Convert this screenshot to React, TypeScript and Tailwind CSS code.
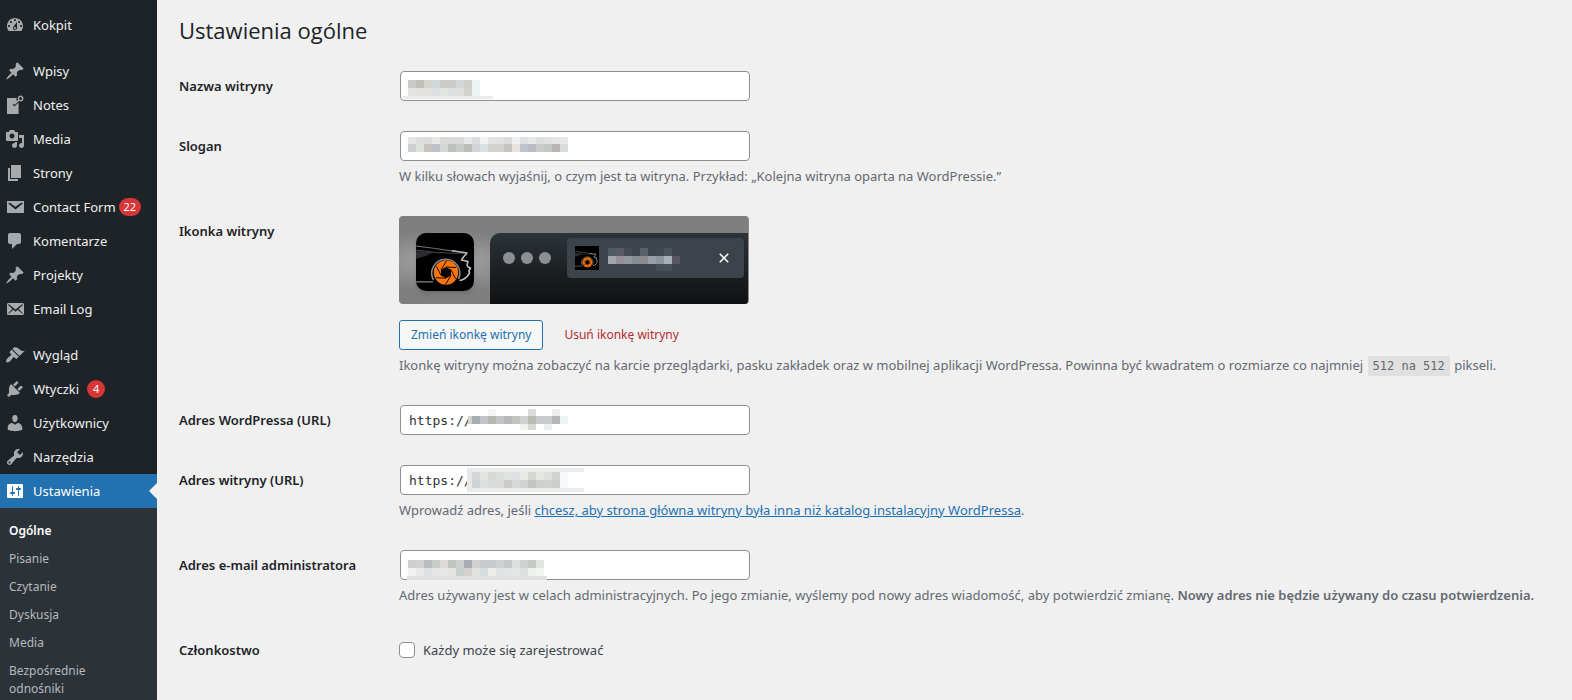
import type { ReactNode } from "react"

interface MenuItem {
  label: string
  icon: string
  badge?: string
  badgeGap?: string
  current?: boolean
}

const ICONS: Record<string, string> = {
  dashboard:
    "M3.76 16h12.48c1.1-1.37 1.76-3.11 1.76-5 0-4.42-3.58-8-8-8s-8 3.58-8 8c0 1.89.66 3.63 1.76 5zM10 4c.55 0 1 .45 1 1s-.45 1-1 1-1-.45-1-1 .45-1 1-1zM6 6c.55 0 1 .45 1 1s-.45 1-1 1-1-.45-1-1 .45-1 1-1zm8 0c.55 0 1 .45 1 1s-.45 1-1 1-1-.45-1-1 .45-1 1-1zm-5.37 5.55L12 7v6c0 1.1-.9 2-2 2s-2-.9-2-2c0-.57.24-1.08.63-1.45zM4 10c.55 0 1 .45 1 1s-.45 1-1 1-1-.45-1-1 .45-1 1-1zm12 0c.55 0 1 .45 1 1s-.45 1-1 1-1-.45-1-1 .45-1 1-1zm-5 3c0-.55-.45-1-1-1s-1 .45-1 1 .45 1 1 1 1-.45 1-1z",
  post: "M10.44 3.02l1.82-1.82 6.36 6.35-1.83 1.82c-1.05-.68-2.48-.57-3.41.36l-.75.75c-.92.93-1.04 2.35-.35 3.41l-1.83 1.82-2.41-2.41-2.8 2.79c-.42.42-3.38 2.71-3.8 2.29s1.86-3.39 2.28-3.81l2.79-2.79L4.1 9.36l1.83-1.82c1.05.69 2.48.57 3.4-.36l.75-.75c.93-.92 1.05-2.35.36-3.41z",
  notes:
    "M2 3h9.6c-.3 1.2-.1 2.2.4 3L7.8 9.800l1.600 1.600L13.600 7.400V19H2zM15.500.500a3 3 0 1 1-1.500 5.600l-4.300 3.900-.9-.9 4.300-4A3 3 0 0 1 15.500.500zm0 1.500a1.500 1.500 0 1 0 0 3 1.500 1.500 0 0 0 0-3z",
  media:
    "M13 11V4c0-.55-.45-1-1-1h-1.67L9 1H5L3.67 3H2c-.55 0-1 .45-1 1v7c0 .55.45 1 1 1h10c.55 0 1-.45 1-1zM7 4.5c1.38 0 2.5 1.12 2.5 2.5S8.38 9.5 7 9.5 4.5 8.38 4.5 7 5.62 4.5 7 4.5zM14 6h5v10.5c0 1.38-1.12 2.5-2.5 2.5S14 17.88 14 16.5s1.12-2.5 2.5-2.5c.17 0 .34.02.5.05V9h-3V6zm-4 8.05V13h2v3.5c0 1.38-1.12 2.5-2.5 2.5S7 17.88 7 16.5 8.12 14 9.5 14c.17 0 .34.02.5.05z",
  page: "M6 15V2h10v13H6zm-1 1h8v2H3V5h2v11z",
  email:
    "M2 4h17v12H2zM4.8 5.83c-.35-.25-.88-.24-1.17.17-.3.41-.11.87.13 1.07l6.73 5.53 6.74-5.53c.24-.2.43-.66.13-1.07-.29-.41-.82-.42-1.17-.17l-5.7 3.86z",
  emailAlt:
    "M19 14.5v-9c0-.83-.67-1.5-1.5-1.5H3.49c-.83 0-1.5.67-1.5 1.5v9c0 .83.67 1.5 1.5 1.5H17.5c.83 0 1.5-.67 1.5-1.5zm-1.31-9.11c.33.33.15.67-.03.84L13.6 9.95l3.9 4.06c.12.14.2.36.06.51-.13.16-.43.15-.56.05l-4.37-3.73-2.14 1.95-2.13-1.95-4.37 3.73c-.13.1-.43.11-.56-.05-.14-.15-.06-.37.06-.51l3.9-4.06-4.06-3.72c-.18-.17-.36-.51-.03-.84s.67-.17.95.07l6.24 5.04 6.25-5.04c.28-.24.62-.4.95-.07z",
  comments: "M5 2h9c1.1 0 2 .9 2 2v7c0 1.1-.9 2-2 2h-2l-5 5v-5H5c-1.1 0-2-.9-2-2V4c0-1.1.9-2 2-2z",
  appearance:
    "M14.48 11.06L7.41 3.99l1.5-1.5c.5-.56 2.3-.47 3.51.32 1.21.8 1.43 1.28 2.91 2.1 1.18.64 2.45 1.26 4.45.85zm-.71.71L6.7 4.7 4.93 6.47c-.39.39-.39 1.02 0 1.41l1.06 1.06c.39.39.39 1.03 0 1.42-.6.6-1.43 1.11-2.21 1.69-.35.26-.7.53-1.01.84C1.43 14.23.4 16.08 1.4 17.07c.99 1 2.84-.03 4.18-1.36.31-.31.58-.66.85-1.02.57-.78 1.08-1.61 1.69-2.21.39-.39 1.02-.39 1.41 0l1.06 1.06c.39.39 1.02.39 1.41 0z",
  plugins:
    "M13.11 4.36L9.87 7.6 8 5.73l3.24-3.24c.35-.34 1.05-.2 1.56.32.52.51.66 1.21.31 1.55zm-8 1.77l.91-1.12 9.01 9.01-1.19.84c-.71.71-2.63 1.16-3.82 1.16H6.14L4.9 17.26c-.59.59-1.54.59-2.12 0-.59-.58-.59-1.53 0-2.12l1.24-1.24v-3.88c0-1.13.4-3.19 1.09-3.89zm7.26 3.97l3.24-3.24c.34-.35 1.04-.21 1.55.31.52.51.66 1.21.31 1.55l-3.24 3.25z",
  users:
    "M10 9.25c-2.27 0-2.73-3.44-2.73-3.44C7 4.02 7.82 2 9.97 2c2.16 0 2.98 2.02 2.71 3.81 0 0-.41 3.44-2.68 3.44zm0 2.57L12.72 10c2.39 0 4.52 2.33 4.52 4.53v2.49s-3.65 1.13-7.24 1.13c-3.65 0-7.24-1.13-7.24-1.13v-2.49c0-2.25 1.94-4.48 4.47-4.48z",
  tools:
    "M16.68 9.77c-1.34 1.34-3.3 1.67-4.95.99l-5.41 6.52c-.99.99-2.59.99-3.58 0s-.99-2.59 0-3.57l6.52-5.42c-.68-1.65-.35-3.61.99-4.95 1.28-1.28 3.12-1.62 4.72-1.06l-2.89 2.89 2.82 2.82 2.86-2.87c.53 1.58.18 3.39-1.08 4.65zM3.81 16.21c.4.39 1.04.39 1.43 0 .4-.4.4-1.04 0-1.43-.39-.4-1.03-.4-1.43 0-.39.39-.39 1.03 0 1.43z",
  settings:
    "M18 16V4c0-.55-.45-1-1-1H3c-.55 0-1 .45-1 1v12c0 .55.45 1 1 1h14c.55 0 1-.45 1-1zM8 11h1c.55 0 1 .45 1 1s-.45 1-1 1H8v1.5c0 .28-.22.5-.5.5s-.5-.22-.5-.5V13H6c-.55 0-1-.45-1-1s.45-1 1-1h1V5.5c0-.28.22-.5.5-.5s.5.22.5.5V11zm5-2h-1c-.55 0-1-.45-1-1s.45-1 1-1h1V5.5c0-.28.22-.5.5-.5s.5.22.5.5V7h1c.55 0 1 .45 1 1s-.45 1-1 1h-1v5.5c0 .28-.22.5-.5.5s-.5-.22-.5-.5V9z",
}

const MENU: MenuItem[][] = [
  [{ label: "Kokpit", icon: "dashboard" }],
  [
    { label: "Wpisy", icon: "post" },
    { label: "Notes", icon: "notes" },
    { label: "Media", icon: "media" },
    { label: "Strony", icon: "page" },
    { label: "Contact Form", icon: "email", badge: "22", badgeGap: "ml-[3px]" },
    { label: "Komentarze", icon: "comments" },
    { label: "Projekty", icon: "post" },
    { label: "Email Log", icon: "emailAlt" },
  ],
  [
    { label: "Wygląd", icon: "appearance" },
    { label: "Wtyczki", icon: "plugins", badge: "4", badgeGap: "ml-2" },
    { label: "Użytkownicy", icon: "users" },
    { label: "Narzędzia", icon: "tools" },
    { label: "Ustawienia", icon: "settings", current: true },
  ],
]

const SUBMENU = ["Ogólne", "Pisanie", "Czytanie", "Dyskusja", "Media", "Bezpośrednie odnośniki"]

interface MosaicRow {
  y: number
  h: number
  colors: string
}

// Pixelated cover for private values. "-" leaves a cell clear.
const SITE_NAME: MosaicRow[] = [
  { y: 9, h: 8, colors: "cacac9 bfc0b9 d5d4cf d0d7d9 ccccc9 cbccca d4d5d9 d0cfc8 edf2f5" },
  { y: 17, h: 8, colors: "e2e3e2 e2e3e1 e2e3df dddfe0 e3e5e2 dcdedf dedfdd d2d3d1 edf2f5" },
]
const TAGLINE: MosaicRow[] = [
  { y: 6, h: 7, colors: "e4e5e5 dddfdc dcdddb e7e8e4 d7dad6 dadbd8 dadbd9 e5e8e4 dadddf f2f2f2 e4e4e4 e2e2e1 dbdbda f0f1ee dae0e4 e7e8e8 dbdee0 e1e2e3 e4e6e3 e7e7e6" },
  { y: 13, h: 8, colors: "cecfd0 dee2df c6c5c0 bdc0c5 d4d6d5 bdc1bd c9cbca bcbdb8 d2d4d7 dbe0e3 d2d2d0 d3d3d1 c6c5c4 e7e3dc bdc3cb b8bcc2 cbcbcb c5c7c2 b8b6b7 d8dddc" },
]
const WP_URL: MosaicRow[] = [
  { y: 4, h: 7, colors: "- - f5f5f3 - - - - dcdcdb - - ededec -" },
  { y: 11, h: 8, colors: "a6acaf c2c5c9 b8b8b3 c4c4c4 b5b9bc c2c2c0 cdd1d3 b9bab3 c8c9cc c9cccd b8b5b7 edf2f2" },
  { y: 19, h: 6, colors: "- - - - - - f1f2ed d7d8d2 - ebefef - -" },
]
const SITE_URL: MosaicRow[] = [
  { y: 3, h: 4, colors: "ececec ececec ececec ececec ececec ececec ececec ececec ececec ececec ececec ececec ececec ececec" },
  { y: 7, h: 8, colors: "d3d6d6 e3e4e2 d7d9d5 dcdedc e1e3e2 dfe0e1 e8e9e5 d4d6d0 e5e6e2 dfe0de d2d3d3 f5f9fa - -" },
  { y: 15, h: 8, colors: "cfd4d5 dbe0df d9dbda d9dad9 cbccca d6d7d6 d2d4d3 c3c5c1 cdcecd cfd0d0 cdcecc f5f9f9 - -" },
  { y: 23, h: 4, colors: "ececec ececec ececec ececec ececec ececec ececec ececec ececec ececec ececec ececec ececec ececec" },
]
const ADMIN_EMAIL: MosaicRow[] = [
  { y: 10, h: 8, colors: "cfcfd0 d4d3d1 b9bdc0 caccca dcdad6 c0c3c0 cccfce a8abb0 cfd0cf c8cbcc c8cbcc cfd0cf c7c9c8 dfdfdf d0d2d1 c5c8c4 e0e4e3" },
  { y: 18, h: 8, colors: "f1f1f1 e9e9e9 dfe0e1 e5e5e5 e7e7e7 e3e4e2 c9cecf d3d2cf e2e2e0 d6dbdd edeeea e1e2e3 e3e5e5 e5e6e6 dedfdf edf0ec f2f4f1" },
]
const TAB_TITLE: MosaicRow[] = [
  { y: 0, h: 8, colors: "515960 5c5b61 454b52 - 566068 - 42484e 4b535a -" },
  { y: 8, h: 8, colors: "a4a5aa 948f96 92979d 888d94 8b8b8f 989fa7 8e949c a8afb4 5a565d" },
  { y: 16, h: 7, colors: "- - - - - - 464e56 4a5057 -" },
]

function Mosaic({ rows, className }: { rows: MosaicRow[]; className: string }) {
  const width = rows[0].colors.split(" ").length * 8
  return (
    <svg width={width} height="30" className={className} shapeRendering="crispEdges" aria-hidden="true">
      {rows.map((row) =>
        row.colors
          .split(" ")
          .map((c, i) => (c === "-" ? null : <rect key={`${row.y}-${i}`} x={i * 8} y={row.y} width="8" height={row.h} fill={`#${c}`} />)),
      )}
    </svg>
  )
}

function MenuIcon({ name }: { name: string }) {
  return (
    <svg viewBox="0 0 20 20" className="size-5 shrink-0" fill="currentColor" fillRule="evenodd" aria-hidden="true">
      <path d={ICONS[name]} />
    </svg>
  )
}

function SiteIcon({ className }: { className: string }) {
  return (
    <svg viewBox="0 0 58 58" className={className} fill="none" aria-hidden="true">
      <rect width="58" height="58" fill="#000" />
      <path d="M0 18l18 1-8 4-10 3z" fill="#2a2c2f" />
      <path d="M0 17l24 3" stroke="#45484b" />
      <path d="M0 13c14 1.5 27 3.500 40 5.500" stroke="#777b80" strokeWidth="1.200" />
      <path d="M24 19.500l16 1 8-.5" stroke="#3c3f42" />
      <path
        d="M36 17.800l15 2.200-3.500 4-2 3 6.500 1.500-1 3.500 1 2 2.500 1-1.500 2.500.5 2.500-2 3c-2 2.500-4.500 4-8 4.500"
        stroke="#b9bec4"
        strokeWidth="1.600"
        strokeLinejoin="round"
      />
      <path d="M0 48.800h17" stroke="#85898d" strokeWidth="1.300" />
      <path d="M17.500 47a14 14 0 1 1 25-1" stroke="#83898f" strokeWidth="1.600" />
      <circle cx="30" cy="39.500" r="12.200" fill="#f9740d" />
      <path d="M30 34l5 2.800v5.600l-5 2.800-5-2.800v-5.600z" fill="#000" />
      <path d="M30 34l10 .5M35 36.800l4.500 9M35 42.400l-5.500 9M30 45.200l-10-.5M25 42.400l-4.500-9M25 36.800l5.500-9" stroke="#1a0c00" />
    </svg>
  )
}

function Row({ label, htmlFor, children }: { label: string; htmlFor?: string; children: ReactNode }) {
  return (
    <div className="flex">
      <div className="w-[220px] shrink-0 pt-5 font-semibold text-[#1d2327]">
        {htmlFor ? <label htmlFor={htmlFor}>{label}</label> : label}
      </div>
      <div className="min-w-0 flex-1 py-[15px]">{children}</div>
    </div>
  )
}

interface FieldProps {
  id: string
  type?: string
  value?: string
  children: ReactNode
}

function Field({ id, type = "text", value = "", children }: FieldProps) {
  return (
    <div className="relative ml-px w-[350px] max-w-full">
      <input
        id={id}
        type={type}
        defaultValue={value}
        className="block h-[30px] w-full rounded-[4px] border border-[#8c8f94] bg-white px-2 font-['DejaVu_Sans_Mono',monospace] text-[13px] text-[#2c3338] outline-none focus:border-[#2271b1]"
      />
      {children}
    </div>
  )
}

function Description({ children }: { children: ReactNode }) {
  return <p className="mt-[5px] leading-5 text-[#646970]">{children}</p>
}

function Sidebar() {
  return (
    <nav className="flex w-[157px] shrink-0 flex-col bg-[#1d2327] pt-2 text-[#f0f0f1]">
      <div className="flex flex-col gap-3">
        {MENU.map((group, i) => (
          <ul key={i}>
            {group.map((item) => (
              <li key={item.label}>
                <a
                  href="#"
                  aria-current={item.current ? "page" : undefined}
                  className={`relative flex h-[34px] items-center pl-[5px] ${item.current ? "bg-[#2271b1] text-white" : ""}`}
                >
                  <span className={item.current ? "text-white" : "text-[#a7aaad]"}>
                    <MenuIcon name={item.icon} />
                  </span>
                  <span className="ml-2 whitespace-nowrap">{item.label}</span>
                  {item.badge && (
                    <span
                      className={`flex h-[18px] min-w-[18px] items-center justify-center rounded-full bg-[#d63638] px-[5px] text-[11px] text-white ${item.badgeGap}`}
                    >
                      {item.badge}
                    </span>
                  )}
                  {item.current && (
                    <span className="absolute top-1/2 right-0 -translate-y-1/2 border-8 border-transparent border-r-[#f0f0f1]" />
                  )}
                </a>
              </li>
            ))}
          </ul>
        ))}
      </div>
      <ul className="flex-1 bg-[#2c3338] pt-[9px] pb-2 text-[12px]">
        {SUBMENU.map((item, i) => (
          <li key={item}>
            <a
              href="#"
              className={`block py-[5px] pr-6 pl-[9px] leading-[18px] ${i === 0 ? "font-semibold text-white" : "text-[#b4b9be]"}`}
            >
              {item}
            </a>
          </li>
        ))}
      </ul>
    </nav>
  )
}

function IconPreview() {
  return (
    <div className="flex h-[88px] w-[350px] max-w-full gap-4 overflow-hidden rounded-[4px] border-r border-[#8c8c8c] bg-[radial-gradient(ellipse_100px_30px_at_46px_45px,#a6a6a6,#7f7f7f)] pt-[17px] pl-[17px]">
      <SiteIcon className="size-[58px] shrink-0 rounded-[10px] shadow-md" />
      <div className="flex flex-1 items-start rounded-tl-[10px] bg-linear-to-b from-[#2c3338] to-[#101112] pt-[5px] pr-1 pl-[13px]">
        <div className="flex h-10 items-center gap-[6px]">
          <span className="size-3 rounded-full bg-[#8c8f94]" />
          <span className="size-3 rounded-full bg-[#8c8f94]" />
          <span className="size-3 rounded-full bg-[#8c8f94]" />
        </div>
        <div className="relative ml-4 flex h-10 flex-1 items-center justify-between rounded-[4px] bg-[#3c434a] pr-[15px] pl-2">
          <SiteIcon className="size-6" />
          <Mosaic rows={TAB_TITLE} className="absolute top-[10px] left-[41px]" />
          <svg viewBox="0 0 10 10" className="size-[10px]" stroke="#fff" strokeWidth="1.6" aria-hidden="true">
            <path d="M.8.8l8.400 8.400M9.200.8L.8 9.200" />
          </svg>
        </div>
      </div>
    </div>
  )
}

export default function App() {
  return (
    <div className="flex h-screen overflow-hidden bg-[#f0f0f1] font-['Noto_Sans',sans-serif] text-[13px] leading-5">
      <Sidebar />
      <main className="min-w-0 flex-1 pt-[15px] pr-5 pl-[22px]">
        <h1 className="font-['Open_Sans',sans-serif] text-[22px] leading-[30px] text-[#1d2327]">Ustawienia ogólne</h1>
        <form className="mt-[11px]">
          <Row label="Nazwa witryny" htmlFor="blogname">
            <Field id="blogname">
              <span className="absolute bottom-[2px] left-[3px] h-[3px] w-[90px] bg-[#ececec]" />
              <Mosaic rows={SITE_NAME} className="absolute top-0 left-2" />
            </Field>
          </Row>
          <Row label="Slogan" htmlFor="blogdescription">
            <Field id="blogdescription">
              <Mosaic rows={TAGLINE} className="absolute top-0 left-2" />
            </Field>
            <Description>
              W kilku słowach wyjaśnij, o czym jest ta witryna. Przykład: „Kolejna witryna oparta na WordPressie.”
            </Description>
          </Row>
          <Row label="Ikonka witryny">
            <IconPreview />
            <div className="mt-4 flex gap-[10px] text-[12px]">
              <button type="button" className="h-[30px] rounded-[3px] border border-[#2271b1] bg-[#f6f7f7] px-[11px] text-[#2271b1]">
                Zmień ikonkę witryny
              </button>
              <button type="button" className="h-[30px] px-[11px] text-[#b32d2e]">
                Usuń ikonkę witryny
              </button>
            </div>
            <Description>
              Ikonkę witryny można zobaczyć na karcie przeglądarki, pasku zakładek oraz w mobilnej aplikacji WordPressa. Powinna być
              kwadratem o rozmiarze co najmniej{" "}
              <code className="mx-px bg-[#e0e0e1] px-[5px] py-[3px] font-['DejaVu_Sans_Mono',monospace] text-[12px] leading-none">
                512 na 512
              </code>{" "}
              pikseli.
            </Description>
          </Row>
          <Row label="Adres WordPressa (URL)" htmlFor="siteurl">
            <Field id="siteurl" type="url" value="https://">
              <span className="absolute top-[11px] left-[68px] h-2 w-1 bg-[#d5d3ce]" />
              <Mosaic rows={WP_URL} className="absolute top-0 left-[72px]" />
            </Field>
          </Row>
          <Row label="Adres witryny (URL)" htmlFor="home">
            <Field id="home" type="url" value="https://">
              <span className="absolute top-[3px] left-[67px] h-6 w-[5px] bg-[#e8e8e7]" />
              <Mosaic rows={SITE_URL} className="absolute top-0 left-[72px]" />
            </Field>
            <Description>
              Wprowadź adres, jeśli{" "}
              <a href="#" className="text-[#2271b1] underline">
                chcesz, aby strona główna witryny była inna niż katalog instalacyjny WordPressa
              </a>
              .
            </Description>
          </Row>
          <Row label="Adres e-mail administratora" htmlFor="admin_email">
            <Field id="admin_email" type="email">
              <span className="absolute bottom-0 left-[7px] h-1 w-[140px] bg-[#e0e0e0]" />
              <Mosaic rows={ADMIN_EMAIL} className="absolute top-0 left-2" />
            </Field>
            <Description>
              Adres używany jest w celach administracyjnych. Po jego zmianie, wyślemy pod nowy adres wiadomość, aby potwierdzić
              zmianę. <strong className="font-semibold">Nowy adres nie będzie używany do czasu potwierdzenia.</strong>
            </Description>
          </Row>
          <Row label="Członkostwo">
            <label className="flex items-center gap-2 pt-[5px] text-[#3c434a]">
              <input type="checkbox" className="size-4 appearance-none rounded-[4px] border border-[#8c8f94] bg-white checked:bg-[#2271b1]" />
              Każdy może się zarejestrować
            </label>
          </Row>
        </form>
      </main>
    </div>
  )
}
